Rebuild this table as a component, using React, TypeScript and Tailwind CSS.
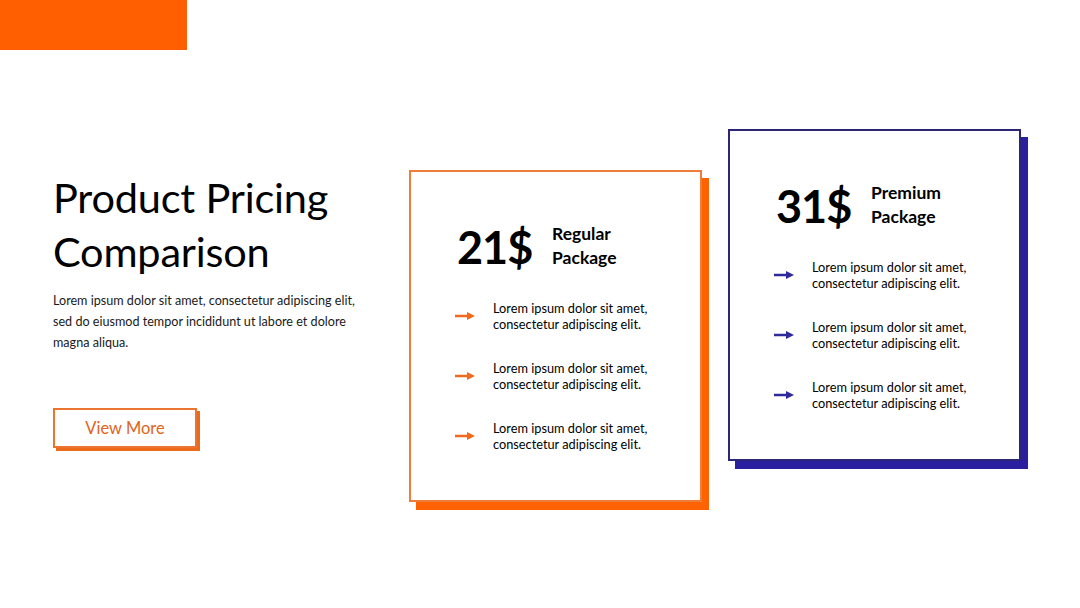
import React from 'react';

const Arrow = ({ color }: { color: string }) => (
  <svg width="20" height="10" viewBox="0 0 20 10" className="shrink-0">
    <line x1="0" y1="5" x2="14" y2="5" stroke={color} strokeWidth="2.5" />
    <polygon points="12,1 20,5 12,9" fill={color} />
  </svg>
);

const bullets = [1, 2, 3];

const PriceCard = ({
  price,
  label,
  border,
  shadow,
  arrow,
}: {
  price: string;
  label: string[];
  border: string;
  shadow: string;
  arrow: string;
}) => (
  <div className={`w-[293px] h-[332px] bg-white border-2 ${border} ${shadow} pt-[52px] pl-[44px]`}>
    <div className="flex items-start">
      <div className="w-[97px] pl-[2px] text-[45px] leading-[46px] font-bold tracking-[-1px] text-black">{price}</div>
      <div className="text-[17.5px] leading-[24px] font-bold text-black -mt-[2px]">
        {label.map((l) => (
          <div key={l}>{l}</div>
        ))}
      </div>
    </div>
    <div className="mt-[30px] flex flex-col gap-[28px]">
      {bullets.map((b) => (
        <div key={b} className="flex items-center">
          <Arrow color={arrow} />
          <div className="ml-[18px] text-[12.75px] leading-[16px] text-black">
            Lorem ipsum dolor sit amet,
            <br />
            consectetur adipiscing elit.
          </div>
        </div>
      ))}
    </div>
  </div>
);

export default function App() {
  return (
    <div className="w-[1080px] h-[608px] bg-white overflow-hidden font-['Lato',sans-serif]">
      <div className="w-[187px] h-[50px] bg-[#ff5f00]" />
      <div className="flex items-start pl-[53px]">
        <div className="w-[330px] mt-[120px]">
          <h1 className="text-[41.5px] leading-[54px] text-black font-normal tracking-[-0.2px]">
            Product Pricing
            <br />
            Comparison
          </h1>
          <p className="mt-[12px] text-[12.6px] leading-[21px] text-[#1a1a1a]">
            Lorem ipsum dolor sit amet, consectetur adipiscing elit,
            <br />
            sed do eiusmod tempor incididunt ut labore et dolore
            <br />
            magna aliqua.
          </p>
          <button className="mt-[55px] w-[144px] h-[40px] bg-white border-2 border-[#ec7430] shadow-[3px_3px_0_0_#ec6a1c] text-[16.5px] text-[#e0641a]">
            View More
          </button>
        </div>
        <div className="ml-[26px] mt-[120px]">
          <PriceCard
            price="21$"
            label={['Regular', 'Package']}
            border="border-[#ee7d3a]"
            shadow="shadow-[7px_8px_0_0_#ff6200]"
            arrow="#ee6a1e"
          />
        </div>
        <div className="ml-[26px] mt-[79px]">
          <PriceCard
            price="31$"
            label={['Premium', 'Package']}
            border="border-[#2b2676]"
            shadow="shadow-[7px_8px_0_0_#2a1f9e]"
            arrow="#2e2a9a"
          />
        </div>
      </div>
    </div>
  );
}
